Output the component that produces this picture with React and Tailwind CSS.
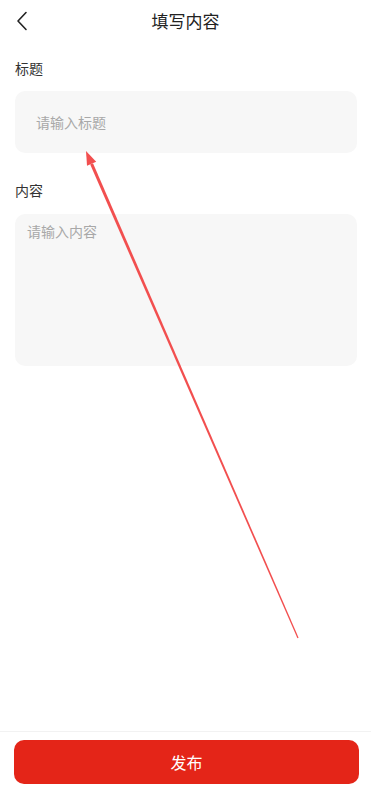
import React from "react";

export default function App() {
  const font = { fontFamily: '"Noto Sans CJK SC", "Noto Sans", sans-serif' };
  return (
    <div className="relative flex h-[788px] w-full flex-col bg-white" style={font}>
      <header className="relative flex h-[42px] items-center justify-center">
        <button className="absolute left-[12px] top-[10px] flex h-[22px] w-[20px] items-center justify-center">
          <svg width="14" height="20" viewBox="0 0 14 20" fill="none">
            <path d="M11 1.5 L3 10 L11 18.5" stroke="#222" strokeWidth="1.6" strokeLinecap="round" strokeLinejoin="round" />
          </svg>
        </button>
        <h1 className="text-[17px] leading-[22px] text-[#222] mt-[-1px]">填写内容</h1>
      </header>

      <main className="flex flex-col pl-[15px] pr-[14px]">
        <label className="mt-[16px] text-[14px] leading-[20px] text-[#333]">标题</label>
        <div className="mt-[13px] flex h-[62px] items-center rounded-[10px] bg-[#f7f7f7] px-[21px]">
          <span className="text-[14px] leading-[20px] text-[#a8a8a8]">请输入标题</span>
        </div>

        <label className="mt-[27px] text-[14px] leading-[20px] text-[#333]">内容</label>
        <div className="mt-[14px] h-[152px] rounded-[10px] bg-[#f7f7f7] px-[12px] pt-[4px]">
          <span className="text-[14px] leading-[20px] text-[#a8a8a8]">请输入内容</span>
        </div>
      </main>

      <div className="flex-1" />

      <footer className="border-t border-[#f2f2f2] pl-[14px] pr-[12px] pt-[8px] pb-[4px]">
        <button className="flex h-[44px] w-full items-center justify-center rounded-[10px] bg-[#e42518] text-[16px] text-white">
          发布
        </button>
      </footer>

      <svg className="pointer-events-none absolute left-0 top-0" width="371" height="788" viewBox="0 0 371 788">
        <polygon points="298.6,637.8 297.4,638.3 90.2,164.4 93,163.2" fill="#f24f4f" />
        <polygon points="86,151 87,165.8 96.2,161.8" fill="#f24f4f" />
      </svg>
    </div>
  );
}
